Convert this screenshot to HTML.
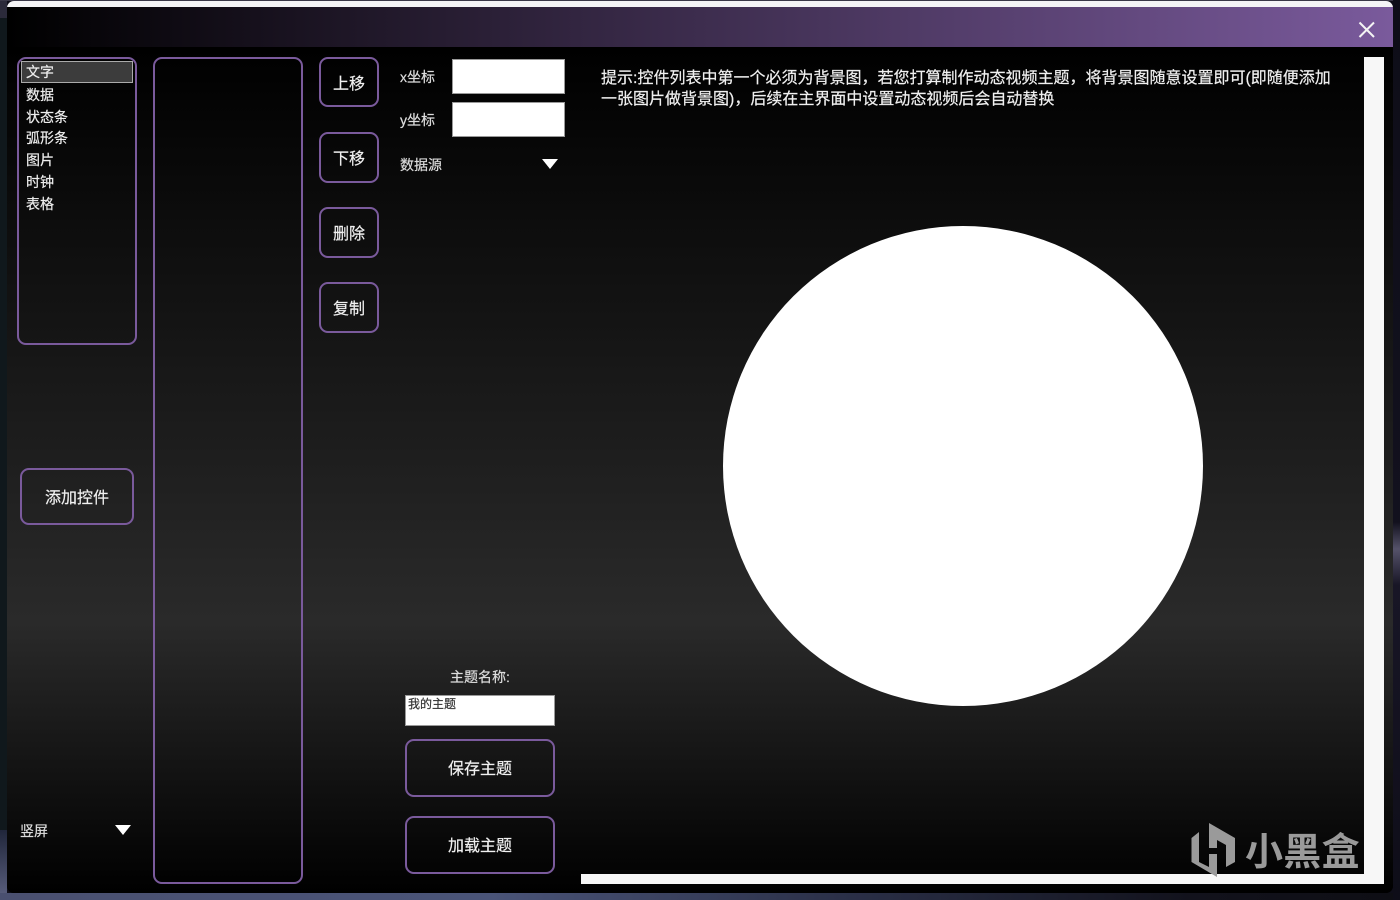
<!DOCTYPE html>
<html lang="zh"><head><meta charset="utf-8"><title>主题编辑器</title>
<style>
*{box-sizing:border-box}
html,body{margin:0;padding:0}
body{width:1400px;height:900px;position:relative;overflow:hidden;background:#0e0d18;font-family:"Liberation Sans","Noto Sans CJK SC",sans-serif;color:#eee}
.a{position:absolute}
.t{position:absolute;white-space:nowrap;line-height:1.2;-webkit-text-stroke:.2px currentColor}
.pb{position:absolute;border:2px solid #7a5a9c;border-radius:9px}
.btn{position:absolute;border:2px solid #7a5a9c;border-radius:9px;display:flex;align-items:center;justify-content:center;font-size:16px;color:#f0f0f0;padding-bottom:2px;-webkit-text-stroke:.2px currentColor}
.inp{position:absolute;background:#fff;border:1px solid #999}
.tri{position:absolute;width:0;height:0;border-left:8px solid transparent;border-right:8px solid transparent;border-top:10px solid #fff}
.li{position:absolute;left:26px;font-size:14px;line-height:20px;color:#eee;white-space:nowrap;-webkit-text-stroke:.2px currentColor}
</style></head><body>
<div class="a" style="left:0;top:0;width:7px;height:18px;background:#2b2a3a"></div>
<div class="a" style="left:0;top:18px;width:7px;height:812px;background:#10181c"></div>
<div class="a" style="left:0;top:830px;width:7px;height:70px;background:linear-gradient(#20263a,#5c6180)"></div>
<div class="a" style="left:0;top:893px;width:1400px;height:7px;background:linear-gradient(90deg,#4a5070 0,#4a5478 35%,#2b3048 60%,#12121c 85%,#0e0e14 100%)"></div>
<div class="a" style="left:0;top:0;width:1400px;height:1px;background:#3a3848"></div>
<div class="a" style="left:1393px;top:0;width:7px;height:900px;background:linear-gradient(#0e0d18 0,#12111e 58%,#55526a 61%,#181626 65%,#0e0d18 100%)"></div>

<div class="a" style="left:7px;top:1px;width:1386px;height:892px;border-radius:7px;overflow:hidden;background:linear-gradient(#000 0,#2a2a2a 66%,#000 100%)">
  <div class="a" style="left:0;top:0;width:100%;height:6px;background:#f4f4f6"></div>
  <div class="a" style="left:0;top:6px;width:100%;height:40px;background:linear-gradient(90deg,#000 0,#7a5a9c 100%)"></div>
</div>
<div class="a" style="left:7px;top:47px;width:1386px;height:846px;background:linear-gradient(#000 0,#2a2a2a 68%,#000 100%);border-radius:0 0 7px 7px"></div>

<svg class="a" style="left:1355px;top:18px" width="24" height="24" viewBox="0 0 24 24"><path d="M4.5 4.5L19 19M19 4.5L4.5 19" stroke="#f4f4f4" stroke-width="2" fill="none"/></svg>

<div class="pb" style="left:17px;top:57px;width:120px;height:288px"></div>
<div class="a" style="left:21px;top:61px;width:112px;height:22px;background:#3c3c3c;border:1px solid #aaa"></div>
<div class="li" style="top:62px">文字</div>
<div class="li" style="top:85px">数据</div>
<div class="li" style="top:107px">状态条</div>
<div class="li" style="top:128px">弧形条</div>
<div class="li" style="top:150px">图片</div>
<div class="li" style="top:172px">时钟</div>
<div class="li" style="top:194px">表格</div>

<div class="btn" style="left:20px;top:468px;width:114px;height:57px">添加控件</div>
<div class="t" style="left:20px;top:823px;font-size:14px;color:#ddd">竖屏</div>
<div class="tri" style="left:114.5px;top:825px"></div>

<div class="pb" style="left:153px;top:57px;width:150px;height:827px"></div>

<div class="btn" style="left:319px;top:57px;width:60px;height:50px;padding-bottom:0">上移</div>
<div class="btn" style="left:319px;top:132px;width:60px;height:51px">下移</div>
<div class="btn" style="left:319px;top:207px;width:60px;height:51px">删除</div>
<div class="btn" style="left:319px;top:282px;width:60px;height:51px">复制</div>

<div class="t" style="left:400px;top:69px;font-size:14px;color:#ddd">x坐标</div>
<div class="inp" style="left:452px;top:59px;width:113px;height:35px"></div>
<div class="t" style="left:400px;top:112px;font-size:14px;color:#ddd">y坐标</div>
<div class="inp" style="left:452px;top:102px;width:113px;height:35px"></div>
<div class="t" style="left:400px;top:157px;font-size:14px;color:#ddd">数据源</div>
<div class="tri" style="left:542px;top:159px"></div>

<div class="t" style="left:450px;top:669px;font-size:14px;color:#ddd">主题名称:</div>
<div class="inp" style="left:405px;top:695px;width:150px;height:31px"></div>
<div class="t" style="left:408px;top:697px;font-size:12px;color:#333">我的主题</div>
<div class="btn" style="left:405px;top:739px;width:150px;height:58px">保存主题</div>
<div class="btn" style="left:405px;top:816px;width:150px;height:58px">加载主题</div>

<div class="t" style="left:601px;top:68px;font-size:16px;line-height:21px;color:#f0f0f0">提示:控件列表中第一个必须为背景图，若您打算制作动态视频主题，将背景图随意设置即可(即随便添加<br>一张图片做背景图)，后续在主界面中设置动态视频后会自动替换</div>

<div class="a" style="left:1364px;top:57px;width:20px;height:827px;background:#f7f7f7"></div>
<div class="a" style="left:581px;top:874px;width:803px;height:10px;background:#f7f7f7"></div>
<div class="a" style="left:722.5px;top:225.5px;width:480px;height:480px;border-radius:50%;background:#fff"></div>

<svg class="a" style="left:1185px;top:818px" width="60" height="64" viewBox="1185 818 60 64"><path fill="#9a9a9a" d="M1209 823L1235 838V862L1226 867V845L1217 840V848H1209ZM1199 832L1191.500 838V862L1217 877V854H1209V867L1199 862Z"/></svg>
<div class="t" style="left:1245px;top:826px;font-size:38px;line-height:46px;font-weight:700;color:#9a9a9a;letter-spacing:.3px;font-family:'Noto Sans CJK SC',sans-serif;-webkit-text-stroke:0">小黑盒</div>
</body></html>
